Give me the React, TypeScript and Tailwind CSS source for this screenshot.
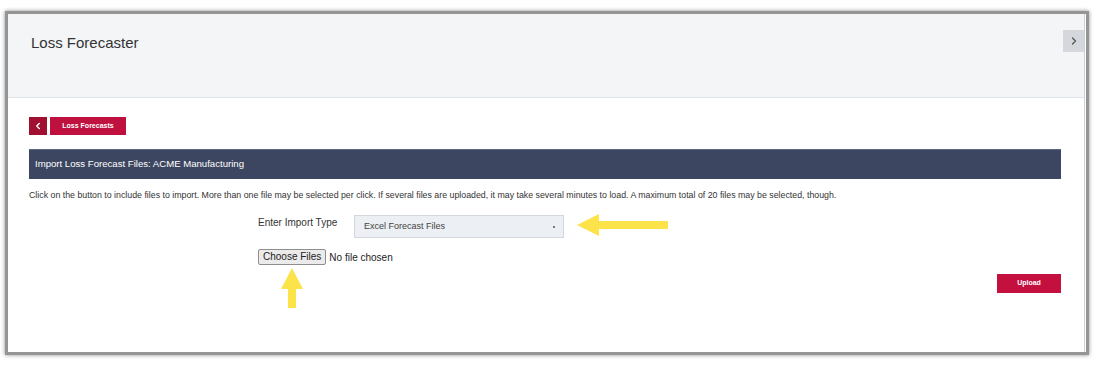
import React from 'react';
import { ChevronLeft, ChevronRight } from 'lucide-react';

const font = { fontFamily: '"Liberation Sans", Arial, sans-serif' };

// yellow annotation arrows drawn over the form
const ArrowLeft = () => (
  <svg width="92" height="22" viewBox="0 0 92 22" className="absolute left-[577px] top-[214px]">
    <polygon points="0,11 22,0 22,7 91,7 91,15 22,15 22,22" fill="#fde34a" />
  </svg>
);

const ArrowUp = () => (
  <svg width="22" height="40" viewBox="0 0 22 40" className="absolute left-[281px] top-[268px]">
    <polygon points="11,0 22,21 15,21 15,40 7,40 7,21 0,21" fill="#fde34a" />
  </svg>
);

const App: React.FC = () => {
  return (
    <div className="relative w-[1098px] h-[369px] bg-white overflow-hidden" style={font}>
      <div className="ml-[5px] mt-[11px] w-[1084px] h-[344px] border-[3px] border-[#959595] shadow-[0_0_4px_rgba(0,0,0,0.45)] bg-white">
        <div className="h-full border-r border-[#c9d0d8] mr-[1px]">
          {/* Header */}
          <div className="h-[84px] bg-[#f4f5f7] border-b border-[#dfe3ea] flex justify-between items-start">
            <h1 className="pl-[23px] pt-[20px] text-[15px] text-[#333] leading-[17px]">Loss Forecaster</h1>
            <button className="mt-[16px] w-[21px] h-[22px] bg-[#d4d7db] flex items-center justify-center">
              <ChevronRight size={12} strokeWidth={2.5} color="#555" />
            </button>
          </div>

          {/* Content */}
          <div className="pl-[21px] pr-[23px]">
            <div className="flex gap-[3px] pt-[19px]">
              <button className="w-[18px] h-[18px] bg-[#a10f31] flex items-center justify-center">
                <ChevronLeft size={10} strokeWidth={3.5} color="#fff" />
              </button>
              <button className="w-[76px] h-[18px] bg-[#bf1140] text-white text-[7px] font-bold">Loss Forecasts</button>
            </div>

            <div className="mt-[14px] h-[30px] bg-[#3c4660] border-t border-[#5d6780] flex items-center pl-[6px]">
              <span className="text-white text-[9.6px]">Import Loss Forecast Files: ACME Manufacturing</span>
            </div>

            <p className="mt-[10px] text-[8.8px] leading-[12px] text-[#333]">
              Click on the button to include files to import. More than one file may be selected per click. If several files are uploaded, it may take several minutes to load. A maximum total of 20 files may be selected, though.
            </p>

            <div className="ml-[229px] mt-[14px] flex items-start">
              <label className="w-[96px] text-[10px] text-[#333] leading-[12px] pt-[2px]">Enter Import Type</label>
              <div className="w-[210px] h-[23px] bg-[#eceff3] border border-[#d3d8de] flex items-center justify-between pl-[9px] pr-[8px]">
                <span className="text-[9px] text-[#444]">Excel Forecast Files</span>
                <span className="w-[2px] h-[2px] bg-[#555] rounded-full" />
              </div>
            </div>

            <div className="ml-[229px] mt-[11px] flex items-center gap-[3px]">
              <button className="h-[16px] px-[4px] bg-[#ebebeb] border border-[#8e8e8e] rounded-[2px] text-[10px] text-[#222] leading-[12px]">Choose Files</button>
              <span className="text-[10px] text-[#222]">No file chosen</span>
            </div>

            <div className="flex justify-end mt-[9px]">
              <button className="w-[64px] h-[19px] bg-[#c4103f] text-white text-[7px] font-bold">Upload</button>
            </div>
          </div>
        </div>
      </div>

      <ArrowLeft />
      <ArrowUp />
    </div>
  );
};

export default App;
